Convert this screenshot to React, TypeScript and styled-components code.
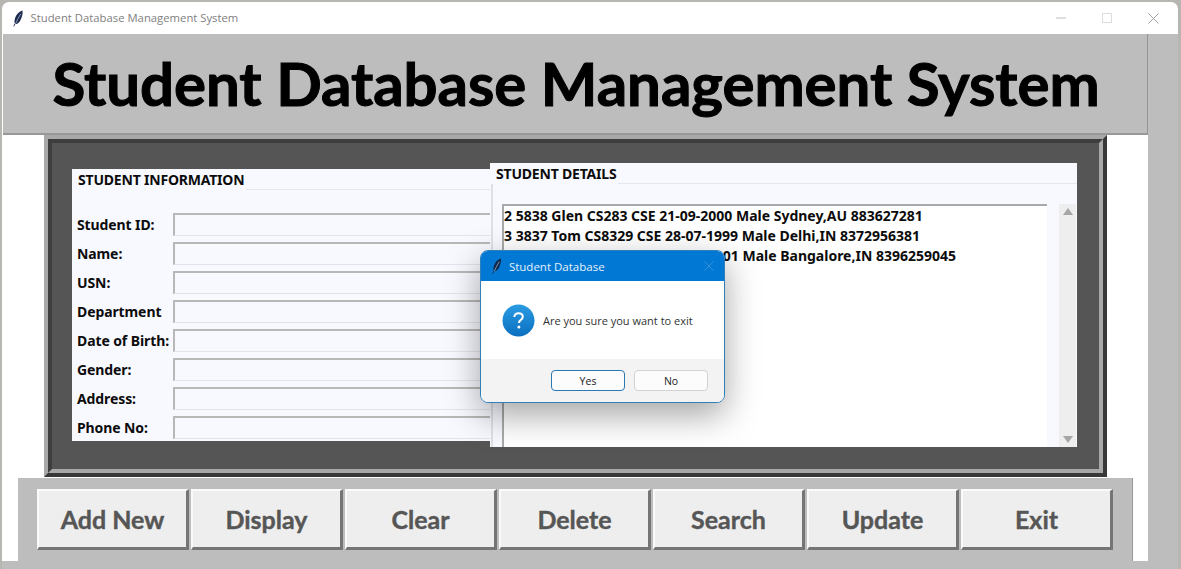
import React from 'react';
import styled, { createGlobalStyle } from 'styled-components';

const GlobalStyle = createGlobalStyle`
  html, body {
    margin: 0;
    padding: 0;
    height: 569px;
    overflow: hidden;
    background-color: #b8b6b2;
  }
`;

const AppWindow = styled.div`
  position: relative;
  box-sizing: border-box;
  width: 1176px;
  height: 567px;
  margin: 2px 0 0 2px;
  background-color: #fff;
  border-radius: 7px 7px 0 0;
  display: flex;
  flex-direction: column;
  overflow: hidden;
  font-family: 'Lato', 'Liberation Sans', sans-serif;
`;

const TitleBar = styled.div`
  flex: none;
  box-sizing: border-box;
  height: 32px;
  display: flex;
  align-items: center;
  padding: 0 2px 0 11px;
  color: #808080;
  font: 11.3px 'Open Sans', sans-serif;
`;

const TitleText = styled.span`
  margin: 0 0 2px 7px;
`;

const WindowControls = styled.div`
  margin-left: auto;
  display: flex;
  align-items: center;
  color: #9a9a9a;
`;

const ControlButton = styled.div`
  width: 46px;
  height: 32px;
  display: flex;
  align-items: center;
  justify-content: center;
`;

const ClientArea = styled.div`
  flex: 1;
  min-height: 0;
  display: flex;
  background-color: #bdbdbd;
`;

const MainColumn = styled.div`
  width: 1146px;
  background-color: #fff;
  display: flex;
  flex-direction: column;
`;

const Banner = styled.div`
  box-sizing: border-box;
  height: 101px;
  margin-left: 1px;
  background-color: #bdbdbd;
  border-right: 1px solid #959595;
  border-bottom: 2px solid #989898;
  display: flex;
  align-items: center;
  justify-content: center;
  padding: 0 0 2px 2px;
  color: #000;
  font-size: 60px;
  font-weight: 700;
  letter-spacing: -0.05px;
  -webkit-text-stroke: 1px #000;
  white-space: nowrap;
`;

const OuterFrame = styled.div`
  box-sizing: border-box;
  width: 1063px;
  height: 342px;
  margin-left: 42px;
  border: 4px solid;
  border-color: #a8a8a8 #383838 #383838 #a8a8a8;
`;

const InnerFrame = styled.div`
  box-sizing: border-box;
  height: 100%;
  padding-left: 20px;
  background-color: #555;
  border: 4px solid;
  border-color: #3e3e3e #a8a8a8 #a8a8a8 #3e3e3e;
  display: flex;
  align-items: flex-start;
`;

const Panel = styled.section<{ $top: number; $width: number; $height: number }>`
  box-sizing: border-box;
  flex: none;
  margin-top: ${({ $top }) => $top}px;
  width: ${({ $width }) => $width}px;
  height: ${({ $height }) => $height}px;
  background-color: #f8f9ff;
  color: #0c0c0c;
`;

const PanelHeading = styled.div<{ $height: number; $left: number }>`
  height: ${({ $height }) => $height}px;
  display: flex;
  align-items: center;
  padding-left: ${({ $left }) => $left}px;
  font: 700 14px 'Noto Sans', sans-serif;
  letter-spacing: -0.2px;
  white-space: nowrap;
`;

const HeadingRule = styled.span`
  flex: 1;
  align-self: flex-end;
  height: 1px;
  margin-left: 2px;
  background-color: #e6e7ee;
`;

const FormRows = styled.div`
  padding-top: 23px;
  display: flex;
  flex-direction: column;
  gap: 6px;
`;

const FormRow = styled.div`
  height: 23px;
  display: flex;
  align-items: center;
`;

const FieldLabel = styled.label`
  flex: none;
  width: 101px;
  padding-left: 5px;
  box-sizing: border-box;
  font: 700 14px 'Noto Sans', sans-serif;
  letter-spacing: -0.1px;
  white-space: nowrap;
`;

const FieldBox = styled.div`
  flex: 1;
  box-sizing: border-box;
  height: 23px;
  border: 1px solid #e4e5ea;
  border-top: 2px solid #b8b8b8;
  border-left: 2px solid #b8b8b8;
  border-right: none;
`;

const DetailsBody = styled.div`
  box-sizing: border-box;
  height: 263px;
  padding: 20px 0 0 9px;
  border-left: 2px solid #dfe0e6;
  margin-left: 1px;
  display: flex;
`;

const RecordList = styled.div`
  box-sizing: border-box;
  width: 545px;
  height: 243px;
  background-color: #fff;
  border-top: 2px solid #a9a9a9;
  border-left: 2px solid #a9a9a9;
  font: 700 14px/20px 'Noto Sans', sans-serif;
  white-space: nowrap;
  overflow: hidden;
`;

const ScrollTrack = styled.div`
  width: 17px;
  height: 243px;
  margin-left: 12px;
  background-color: #eeeeee;
  display: flex;
  flex-direction: column;
  justify-content: space-between;
  align-items: center;
  padding: 4px 0;
  box-sizing: border-box;
`;

const ScrollArrow = styled.span<{ $down?: boolean }>`
  width: 0;
  height: 0;
  border-left: 5px solid transparent;
  border-right: 5px solid transparent;
  ${({ $down }) =>
    $down ? 'border-top: 7px solid #a6a6a6;' : 'border-bottom: 7px solid #a6a6a6;'}
`;

const ButtonBar = styled.div`
  box-sizing: border-box;
  width: 1115px;
  height: 83px;
  margin: 1px 0 0 16px;
  padding: 11px 0 0 19px;
  background-color: #bdbdbd;
  border-right: 1px solid #989898;
  display: flex;
  gap: 2px;
`;

const ActionButton = styled.button`
  flex: none;
  width: 152px;
  height: 61px;
  padding: 0;
  background-color: #eeeeee;
  border: 2px solid;
  border-color: #fafafa #757575 #757575 #fafafa;
  border-bottom-width: 3px;
  border-right-width: 3px;
  color: #565656;
  font-family: 'Lato', sans-serif;
  font-size: 25px;
  font-weight: 700;
  -webkit-text-stroke: 0.4px #565656;
`;

const BottomStrip = styled.div`
  flex: none;
  height: 8px;
  background-color: #bdbdbd;
`;

const SideStrip = styled.div`
  flex: 1;
`;

const Dialog = styled.div`
  position: absolute;
  left: 478px;
  top: 248px;
  box-sizing: border-box;
  width: 245px;
  height: 153px;
  background-color: #fff;
  border: 1px solid #2f7fba;
  border-radius: 8px;
  box-shadow: 0 12px 34px rgba(0, 0, 0, 0.36);
  display: flex;
  flex-direction: column;
  overflow: hidden;
  font-family: 'Open Sans', sans-serif;
`;

const DialogTitle = styled.div`
  flex: none;
  height: 30px;
  padding: 0 8px 0 11px;
  background-color: #0078d4;
  color: #e6f2fb;
  font-size: 11.5px;
  display: flex;
  align-items: center;
  gap: 7px;
`;

const DialogClose = styled.span`
  margin-left: auto;
  margin-right: 2px;
  display: flex;
  color: #3f97dc;
`;

const DialogBody = styled.div`
  flex: 1;
  padding-left: 21px;
  display: flex;
  align-items: center;
  gap: 8px;
  color: #333;
  font-size: 11px;
`;

const DialogFooter = styled.div`
  flex: none;
  height: 43px;
  box-sizing: border-box;
  padding: 11px 16px 0 0;
  background-color: #f3f3f3;
  display: flex;
  justify-content: flex-end;
  gap: 9px;
`;

const DialogButton = styled.button<{ $primary?: boolean }>`
  width: 74px;
  height: 21px;
  padding: 0;
  background-color: #fcfcfc;
  border: 1px solid ${({ $primary }) => ($primary ? '#2a78b4' : '#d2d2d2')};
  border-radius: 4px;
  color: #222;
  font: 10.5px 'Open Sans', sans-serif;
`;

const Feather: React.FC<{ size: number; color: string; vein: string }> = ({ size, color, vein }) => (
  <svg width={size * 0.62} height={size} viewBox="0 0 10 16" style={{ flex: 'none' }}>
    <path d="M9 .5C5.500 1.500 2.500 5 1.600 9.200 1.300 10.800 1.400 12 1.800 12.800.9 13.800.5 14.800.5 15.600l.6.1c.2-.8.6-1.600 1.200-2.400 1.600.1 3.200-1 4.400-3C8.500 7.300 9.600 3.500 9 .5z" fill={color} />
    <path d="M7.400 3.600C5.500 6.500 3.800 9.800 2.300 13.300" stroke={vein} strokeWidth="0.7" fill="none" />
  </svg>
);

const QuestionIcon: React.FC = () => (
  <svg width="33" height="33" viewBox="0 0 33 33" style={{ flex: 'none' }}>
    <defs>
      <linearGradient id="questionFill" x1="0" y1="0" x2="0" y2="1">
        <stop offset="0" stopColor="#2a9be3" />
        <stop offset="1" stopColor="#0b6fc0" />
      </linearGradient>
    </defs>
    <circle cx="16.500" cy="16.500" r="16" fill="url(#questionFill)" />
    <path d="M12.300 13c.2-2.400 1.900-3.800 4.300-3.800 2.500 0 4.200 1.500 4.200 3.500 0 1.600-.8 2.500-2.100 3.400-1.200.8-1.700 1.400-1.700 2.800" stroke="#fff" strokeWidth="2" fill="none" />
    <circle cx="16.900" cy="23" r="1.500" fill="#fff" />
  </svg>
);

const CloseGlyph: React.FC<{ size: number }> = ({ size }) => (
  <svg width={size} height={size} viewBox="0 0 12 12">
    <path d="M.5.5l11 11M11.500.5l-11 11" stroke="currentColor" strokeWidth="1" fill="none" />
  </svg>
);

const fields = [
  'Student ID:',
  'Name:',
  'USN:',
  'Department',
  'Date of Birth:',
  'Gender:',
  'Address:',
  'Phone No:',
];

const records = [
  '2 5838 Glen CS283 CSE 21-09-2000 Male Sydney,AU 883627281',
  '3 3837 Tom CS8329 CSE 28-07-1999 Male Delhi,IN 8372956381',
  '4 9264 Willi CS4729 CSE 12-05-2001 Male Bangalore,IN 8396259045',
];

const actions = ['Add New', 'Display', 'Clear', 'Delete', 'Search', 'Update', 'Exit'];

const App: React.FC = () => (
  <>
    <GlobalStyle />
    <AppWindow>
      <TitleBar>
        <Feather size={17} color="#1d2b4f" vein="#b9c6dc" />
        <TitleText>Student Database Management System</TitleText>
        <WindowControls>
          <ControlButton>
            <svg width="10" height="2" viewBox="0 0 10 2">
              <path d="M0 1h10" stroke="#bdbdbd" strokeWidth="1" />
            </svg>
          </ControlButton>
          <ControlButton>
            <svg width="10" height="10" viewBox="0 0 10 10">
              <rect x=".5" y=".5" width="9" height="9" fill="none" stroke="#dcdcdc" />
            </svg>
          </ControlButton>
          <ControlButton>
            <CloseGlyph size={11} />
          </ControlButton>
        </WindowControls>
      </TitleBar>
      <ClientArea>
        <MainColumn>
          <Banner>Student Database Management System</Banner>
          <OuterFrame>
            <InnerFrame>
              <Panel $top={26} $width={418} $height={272}>
                <PanelHeading $height={21} $left={6}>
                  STUDENT INFORMATION
                  <HeadingRule />
                </PanelHeading>
                <FormRows>
                  {fields.map((field) => (
                    <FormRow key={field}>
                      <FieldLabel>{field}</FieldLabel>
                      <FieldBox />
                    </FormRow>
                  ))}
                </FormRows>
              </Panel>
              <Panel $top={20} $width={587} $height={284}>
                <PanelHeading $height={21} $left={6}>
                  STUDENT DETAILS
                  <HeadingRule />
                </PanelHeading>
                <DetailsBody>
                  <RecordList>
                    {records.map((record) => (
                      <div key={record}>{record}</div>
                    ))}
                  </RecordList>
                  <ScrollTrack>
                    <ScrollArrow />
                    <ScrollArrow $down />
                  </ScrollTrack>
                </DetailsBody>
              </Panel>
            </InnerFrame>
          </OuterFrame>
          <ButtonBar>
            {actions.map((action) => (
              <ActionButton key={action}>{action}</ActionButton>
            ))}
          </ButtonBar>
        </MainColumn>
        <SideStrip />
      </ClientArea>
      <BottomStrip />
      <Dialog>
        <DialogTitle>
          <Feather size={16} color="#10284a" vein="#a9c8e8" />
          Student Database
          <DialogClose>
            <CloseGlyph size={10} />
          </DialogClose>
        </DialogTitle>
        <DialogBody>
          <QuestionIcon />
          Are you sure you want to exit
        </DialogBody>
        <DialogFooter>
          <DialogButton $primary>Yes</DialogButton>
          <DialogButton>No</DialogButton>
        </DialogFooter>
      </Dialog>
    </AppWindow>
  </>
);

export default App;
